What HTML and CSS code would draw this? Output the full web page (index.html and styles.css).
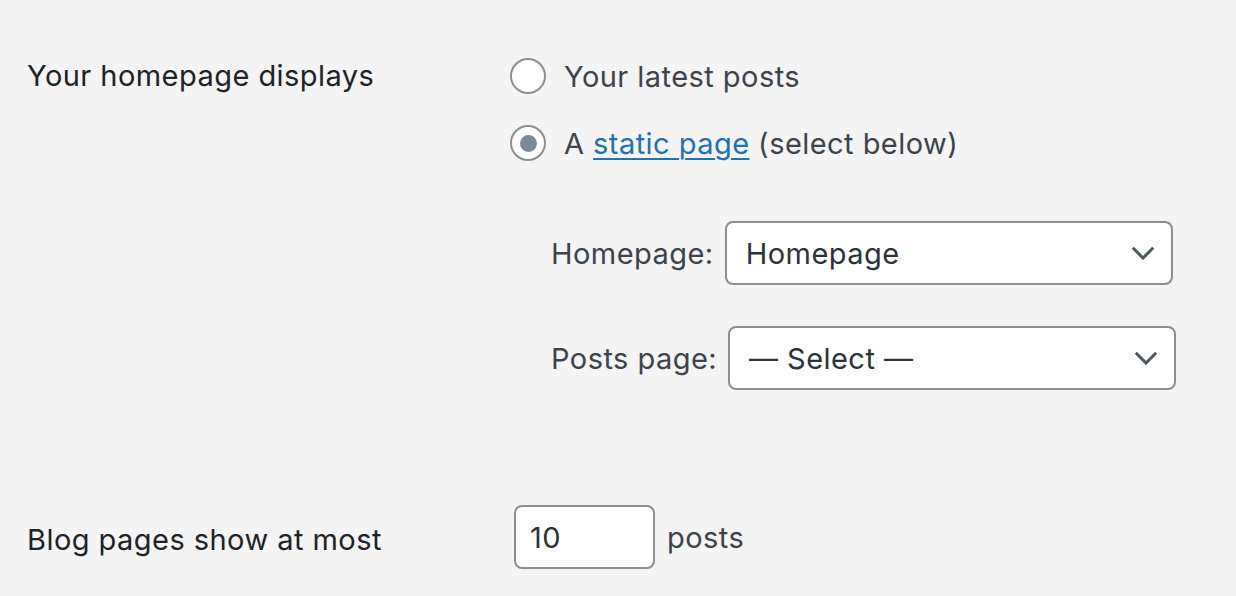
FILE: index.html
```html
<!DOCTYPE html>
<html lang="en">
<head>
<meta charset="utf-8">
<title>Reading Settings</title>
<link rel="stylesheet" href="styles.css">
</head>
<body>
<div class="form">
  <div class="row row-front">
    <div class="th">Your homepage displays</div>
    <div class="td">
      <label class="radio-line"><span class="radio"></span><span>Your latest posts</span></label>
      <label class="radio-line"><span class="radio checked"></span><span>A <a href="#" class="link">static page</a> (select below)</span></label>
      <ul class="page-selects">
        <li class="sel-item"><span class="sel-label">Homepage:</span><span class="select">Homepage<svg class="chev" viewBox="0 0 24 14" width="24" height="14"><path d="M1.8 1.8 L12 12 L22.2 1.8" fill="none" stroke="#50575e" stroke-width="3"/></svg></span></li>
        <li class="sel-item"><span class="sel-label">Posts page:</span><span class="select">— Select —<svg class="chev" viewBox="0 0 24 14" width="24" height="14"><path d="M1.8 1.8 L12 12 L22.2 1.8" fill="none" stroke="#50575e" stroke-width="3"/></svg></span></li>
      </ul>
    </div>
  </div>
  <div class="row row-posts">
    <div class="th">Blog pages show at most</div>
    <div class="td td-inline"><span class="num-input">10</span><span class="suffix">posts</span></div>
  </div>
</div>
</body>
</html>
```
FILE: styles.css
```css
html, body {
  margin: 0;
  padding: 0;
  background: #f4f4f4;
}
body {
  font-family: Inter, "Noto Sans", "Liberation Sans", sans-serif;
  font-size: 29px;
  letter-spacing: 0.45px;
  color: #1d2327;
  width: 1236px;
  height: 596px;
  overflow: hidden;
}
.form {
  padding-left: 27px;
}
.row {
  display: flex;
}
.th {
  width: 483px;
  flex: none;
  line-height: 40px;
}
.row-front {
  padding-top: 56px;
}
.td {
  display: flex;
  flex-direction: column;
}
.radio-line {
  display: flex;
  align-items: center;
  height: 40px;
  color: #3c434a;
  margin-bottom: 27px;
}
.radio-line + .radio-line {
  margin-bottom: 0;
}
.radio {
  box-sizing: border-box;
  width: 36px;
  height: 36px;
  border: 2px solid #8c8f94;
  border-radius: 50%;
  background: #fff;
  margin-right: 18px;
  display: flex;
  align-items: center;
  justify-content: center;
  flex: none;
}
.radio.checked::before {
  content: "";
  width: 17px;
  height: 17px;
  border-radius: 50%;
  background: #7e8993;
}
.link {
  color: #2271b1;
  text-decoration: underline;
  text-decoration-thickness: 2px;
  text-underline-offset: 4px;
}
.page-selects {
  list-style: none;
  margin: 58px 0 0;
  padding: 0 0 0 41px;
  display: flex;
  flex-direction: column;
  gap: 41px;
}
.sel-item {
  display: flex;
  align-items: center;
  color: #3c434a;
}
.sel-label {
  margin-right: 11px;
}
.select {
  box-sizing: border-box;
  width: 448px;
  height: 64px;
  border: 2px solid #8c8f94;
  border-radius: 8px;
  background: #fff;
  display: flex;
  align-items: center;
  justify-content: space-between;
  padding: 0 16px 0 19px;
  color: #2c3338;
}
.chev {
  display: block;
}
.row-posts {
  margin-top: 115px;
  align-items: center;
}
.row-posts .th {
  padding-top: 6px;
}
.td-inline {
  flex-direction: row;
  align-items: center;
  padding-left: 4px;
}
.num-input {
  box-sizing: border-box;
  width: 141px;
  height: 64px;
  border: 2px solid #8c8f94;
  border-radius: 8px;
  background: #fff;
  display: flex;
  align-items: center;
  padding-left: 14px;
  color: #2c3338;
}
.suffix {
  margin-left: 12px;
  color: #3c434a;
}
```
